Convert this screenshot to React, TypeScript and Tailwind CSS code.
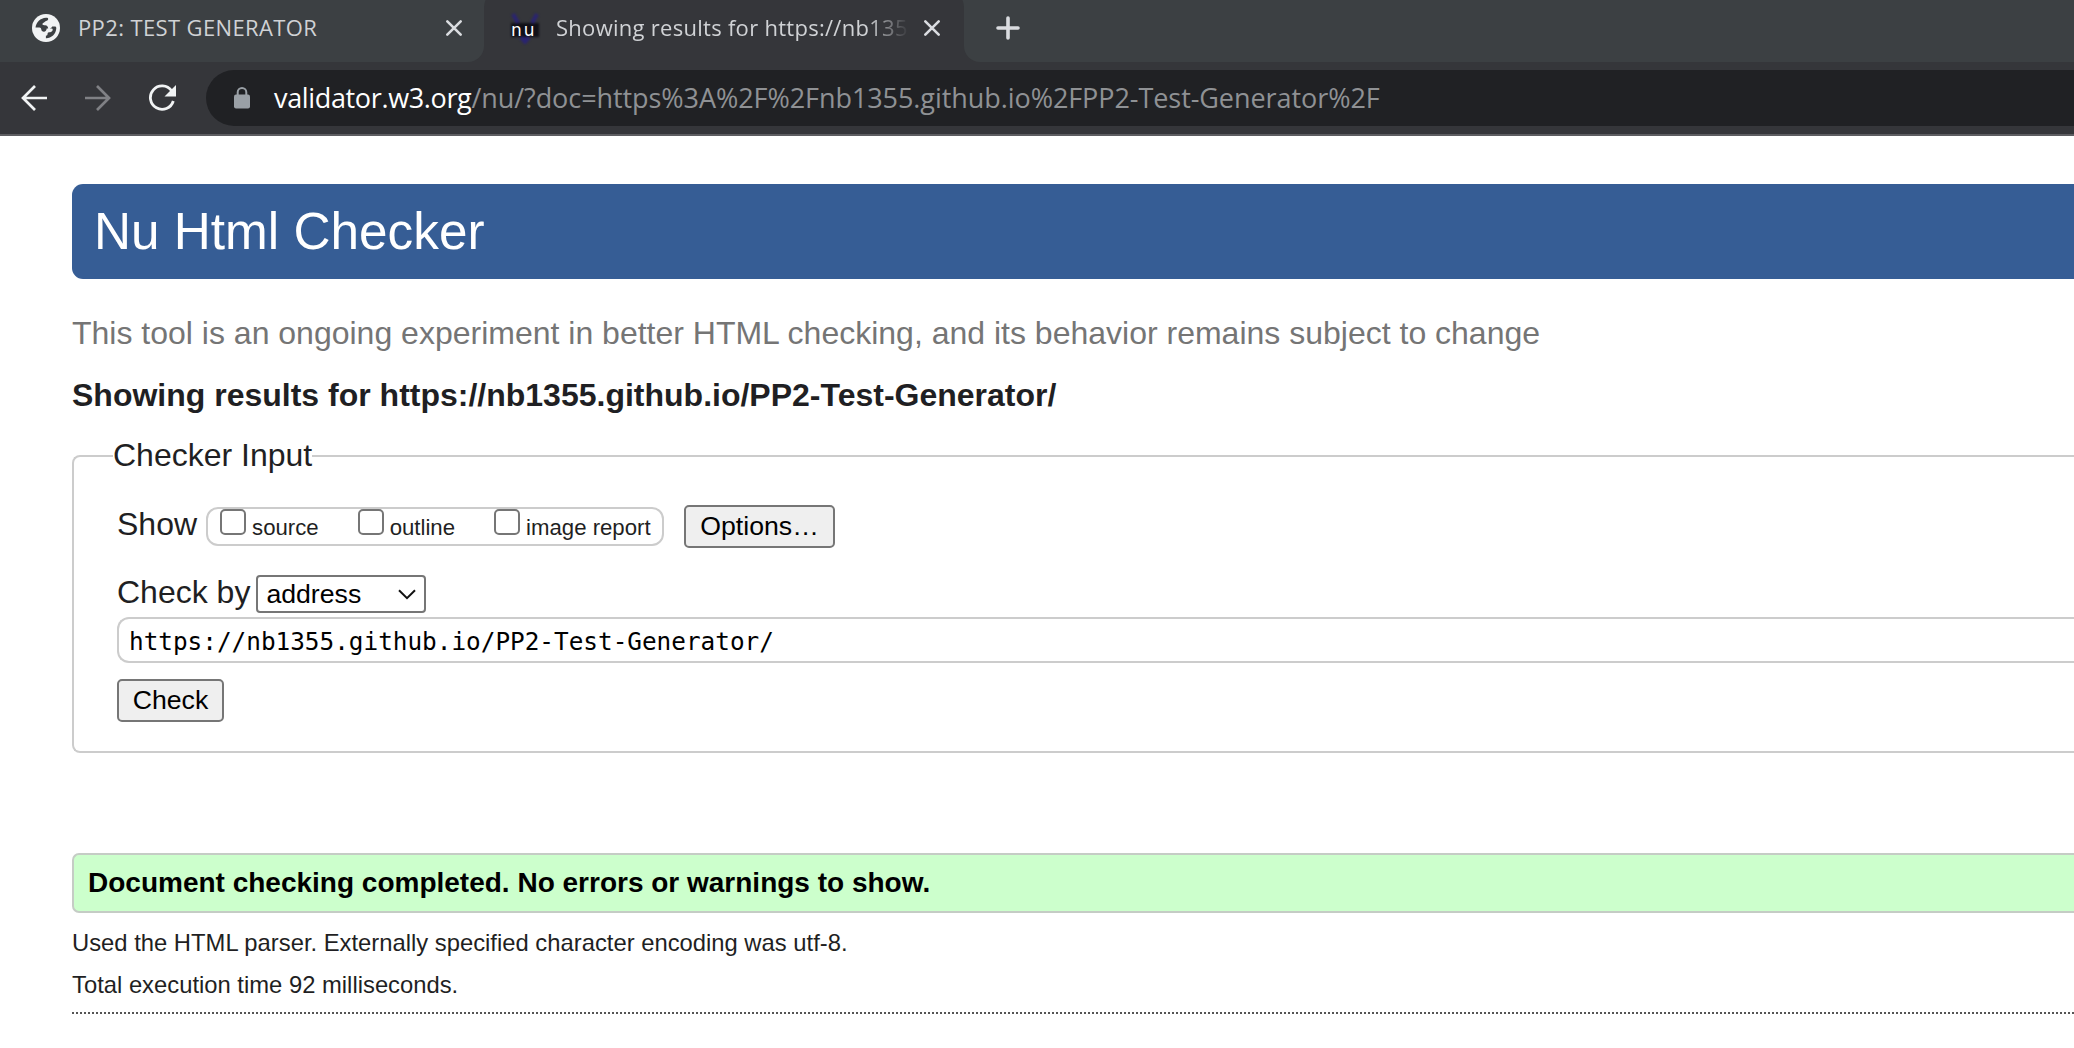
import type { ReactNode } from "react";

function GlobeIcon() {
  return (
    <svg className="h-7 w-7 shrink-0" viewBox="0 0 28 28">
      <circle cx="14" cy="14" r="14" fill="#f1f3f4" />
      <path
        d="M3.5 13.6C4 8.3 8.4 3.9 14 3.7c1.3-.1 2.3.3 2.2 1.500-.2 1.700-2.600 1.500-3.600 2.800-.7 1-2.300.9-2.200 2.200.2 1 1.500.9 2.700 1 2 .2 3 1.500 3.100 3.300h3.300c.9 0 1.300.6 1.200 1.500-.3 1.700-2 2.200-3.800 2.300-.9.1-1.300.7-1.300 1.500 0 1.200-.6 1.900-1.700 2v2.400c5 .3 10.200-4 10.400-10 0-1.100-.5-1.700-1.500-1.700h-2.600c-.6 1.400-1.900 2-3.400 2h-2.100c-.2 1.700-1.200 3.200-2.800 3.200-1.600 0-2.400-.8-2.600-2.200-.1-1-.7-1.900-1.800-1.900z"
        fill="#3c4043"
      />
    </svg>
  );
}

function NuIcon() {
  return (
    <div className="relative h-8 w-[30px] shrink-0">
      <svg className="absolute inset-0 h-8 w-[30px] blur-[1px]" viewBox="0 0 30 32">
        <rect x="1" y="11" width="28" height="14" fill="#111018" />
        <path d="M3 2l5 9M27 2l-5 9M11 25l4 5 4-5" stroke="#2a2470" strokeWidth="4" fill="#2a2470" />
      </svg>
      <span className="absolute left-[1px] top-[6px] font-['DejaVu_Sans'] text-[17px] leading-6 tracking-[2px] text-white">nu</span>
    </div>
  );
}

function CloseIcon() {
  return (
    <svg className="h-[18px] w-[18px] shrink-0" viewBox="0 0 18 18" stroke="#dadce0" strokeWidth="2.6" strokeLinecap="round">
      <path d="M2.3 2.3l13.4 13.4M15.7 2.3L2.3 15.7" />
    </svg>
  );
}

function Arrow({ className }: { className: string }) {
  return (
    <svg className={className} viewBox="0 0 28 28" fill="none" stroke="currentColor" strokeWidth="2.7">
      <path d="M27 14H3M15 2L3 14l12 12" />
    </svg>
  );
}

function Button({ className, children }: { className: string; children: ReactNode }) {
  return (
    <button className={`flex h-[43px] items-center justify-center rounded-[5px] border-2 border-[#767676] bg-[#efefef] pb-[2px] text-[26.67px] leading-8 text-black ${className}`}>
      {children}
    </button>
  );
}

function Option({ label }: { label: string }) {
  return (
    <label className="flex items-start">
      <input type="checkbox" className="h-[26px] w-[26px] appearance-none rounded-[5px] border-2 border-[#767676] bg-white" />
      <span className="ml-[6px] mt-px whitespace-nowrap text-[22.2px] leading-[35px]">{label}</span>
    </label>
  );
}

export default function App() {
  return (
    <div className="h-[1048px] w-full overflow-hidden bg-white font-['Liberation_Sans',sans-serif] text-[#1f1f23]">
      <header className="border-b-2 border-[#5d5d61] bg-[#35363a] font-['Open_Sans',sans-serif]">
        <div className="flex h-[62px] text-[22px] leading-8 text-[#d0d2d5]">
          <div className="flex w-[484px] shrink-0 items-center rounded-br-[16px] bg-[#3c4043] pb-[7px] pl-8 pr-[21px]">
            <GlobeIcon />
            <span className="ml-[18px] grow whitespace-nowrap pb-px tracking-[0.38px]">PP2: TEST GENERATOR</span>
            <CloseIcon />
          </div>
          <div className="w-[480px] shrink-0 overflow-hidden bg-linear-to-b from-[#3c4043] from-50% to-[#35363a] to-50%">
            <div className="-mt-[9px] flex h-[71px] items-center rounded-t-[16px] bg-[#35363a] pb-[7px] pl-[26px] pr-[22px] pt-[9px]">
              <NuIcon />
              <span className="ml-4 w-[353px] shrink-0 overflow-hidden whitespace-nowrap mask-r-from-[88%] mask-r-to-100% pb-px tracking-[0.28px]">
                Showing results for https://nb1355
              </span>
              <span className="ml-[14px] flex">
                <CloseIcon />
              </span>
            </div>
          </div>
          <div className="flex grow items-center rounded-bl-[16px] bg-[#3c4043] pb-[7px] pl-[31px]">
            <svg className="h-[26px] w-[26px]" viewBox="0 0 26 26" stroke="#dadce0" strokeWidth="3.6" strokeLinecap="round">
              <path d="M13 3v20M3 13h20" />
            </svg>
          </div>
        </div>
        <div className="flex h-[72px] items-center pl-5">
          <Arrow className="h-7 w-7 shrink-0 text-[#f1f3f4]" />
          <Arrow className="ml-9 h-7 w-7 shrink-0 rotate-180 text-[#808185]" />
          <svg className="ml-9 h-7 w-7 shrink-0" viewBox="0 0 28 28" fill="none">
            <path d="M23.6 6.8A11.7 11.7 0 1 0 25.3 17" stroke="#f1f3f4" strokeWidth="2.8" />
            <path d="M28 1v11.500H16.500z" fill="#f1f3f4" />
          </svg>
          <div className="ml-[30px] flex h-14 grow items-center rounded-l-full bg-[#202124] pl-7">
            <svg className="h-[22px] w-4 shrink-0" viewBox="0 0 16 22">
              <rect y="7.5" width="16" height="14" rx="2" fill="#9aa0a6" />
              <path d="M3.7 8V5.300a4.300 4.300 0 0 1 8.600 0V8" stroke="#9aa0a6" strokeWidth="2" fill="none" />
            </svg>
            <span className="ml-6 whitespace-nowrap text-[27px] leading-9 text-[#8f9194]">
              <span className="tracking-[-0.35px] text-white">validator.w3.org</span>
              <span className="tracking-[-0.07px]">/nu/?doc=https%3A%2F%2Fnb1355.github.io%2FPP2-Test-Generator%2F</span>
            </span>
          </div>
        </div>
      </header>

      <main className="pl-[72px] pt-12">
        <h1 className="h-[95px] rounded-l-[11px] bg-[#365d95] pl-[22px] text-[51.3px] leading-[95px] text-white">Nu Html Checker</h1>
        <p className="mt-[34px] whitespace-nowrap text-[32px] leading-10 text-[#757575]">
          This tool is an ongoing experiment in better HTML checking, and its behavior remains subject to change
        </p>
        <h2 className="mt-[22px] whitespace-nowrap text-[32px] font-bold leading-10">
          Showing results for https://nb1355.github.io/PP2-Test-Generator/
        </h2>

        <fieldset className="mt-[21px] h-[317px] rounded-l-[8px] border-2 border-r-0 border-[#ccc] pl-[43px]">
          <legend className="-ml-[4px] h-10 text-[32px] leading-[38px]">Checker Input</legend>
          <div className="mt-[29px] flex h-[43px] items-center">
            <span className="pb-[5px] text-[32px] leading-10">Show</span>
            <div className="ml-[9px] flex h-[39px] w-[458px] items-start gap-[39px] rounded-[12px] border-2 border-[#ccc] pl-3">
              <Option label="source" />
              <Option label="outline" />
              <Option label="image report" />
            </div>
            <Button className="ml-5 w-[151px]">Options…</Button>
          </div>
          <div className="mt-[27px] flex h-[38px] items-center">
            <span className="pb-[4px] text-[32px] leading-10">Check by</span>
            <div className="ml-[6px] flex h-[38px] w-[170px] items-center justify-between rounded-[4px] border-2 border-[#767676] bg-white pl-2 pr-[8px] text-[26.67px] leading-8 text-black">
              <span className="pb-px">address</span>
              <svg className="h-[11px] w-[18px]" viewBox="0 0 18 11" fill="none" stroke="#111" strokeWidth="2">
                <path d="M1 1.200l8 8 8-8" />
              </svg>
            </div>
          </div>
          <div className="mt-1 flex h-[46px] items-center rounded-l-[12px] border-2 border-r-0 border-[#ccc] pl-[10px] pt-[3px] font-['DejaVu_Sans_Mono',monospace] text-[24.35px] leading-8 text-black">
            https://nb1355.github.io/PP2-Test-Generator/
          </div>
          <Button className="mt-4 w-[107px]">Check</Button>
        </fieldset>

        <p className="mt-[100px] h-[60px] rounded-l-[7px] border-2 border-r-0 border-[#c5ccc5] bg-[#ccffcc] pl-[14px] text-[28px] font-bold leading-[55px] text-black">
          Document checking completed. No errors or warnings to show.
        </p>
        <div className="border-b-2 border-dotted border-[#555] pb-[6px] pt-[9px] text-[23.8px] leading-[42px]">
          <p>Used the HTML parser. Externally specified character encoding was utf-8.</p>
          <p>Total execution time 92 milliseconds.</p>
        </div>
      </main>
    </div>
  );
}
